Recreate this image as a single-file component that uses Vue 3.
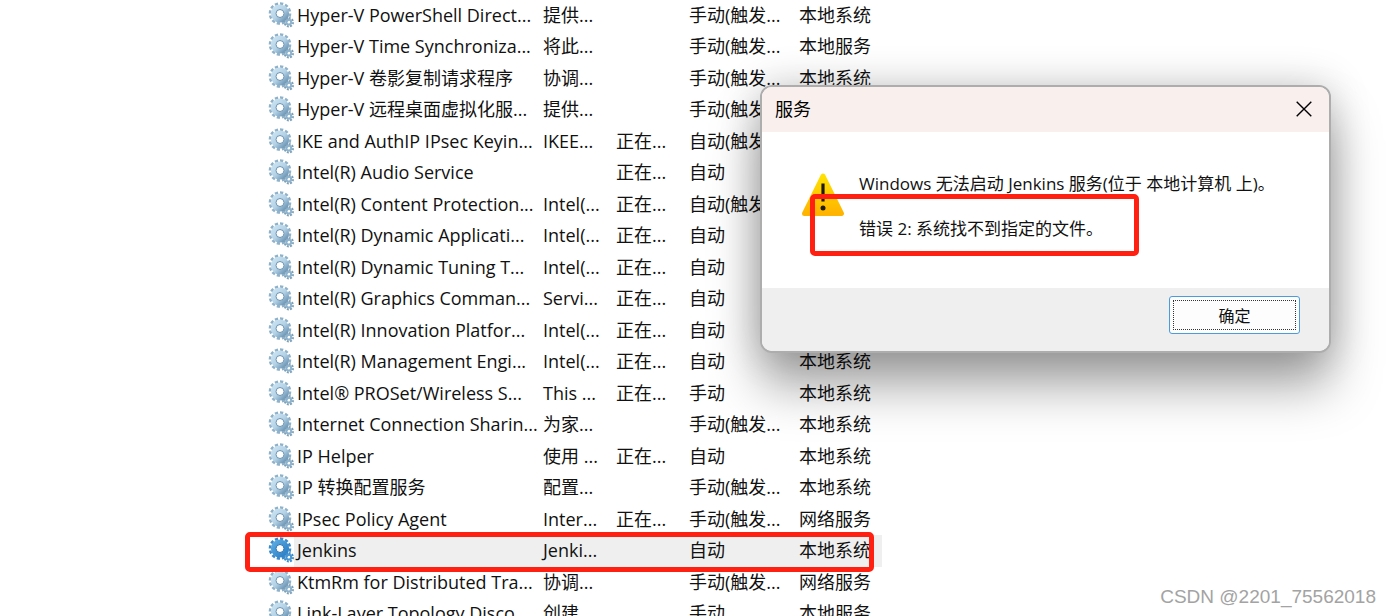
<script setup>
const rows = [
  ['Hyper-V PowerShell Direct...', '提供...', '', '手动(触发...', '本地系统'],
  ['Hyper-V Time Synchroniza...', '将此...', '', '手动(触发...', '本地服务'],
  ['Hyper-V 卷影复制请求程序', '协调...', '', '手动(触发...', '本地系统'],
  ['Hyper-V 远程桌面虚拟化服...', '提供...', '', '手动(触发...', '本地系统'],
  ['IKE and AuthIP IPsec Keyin...', 'IKEE...', '正在...', '自动(触发...', ''],
  ['Intel(R) Audio Service', '', '正在...', '自动', ''],
  ['Intel(R) Content Protection...', 'Intel(...', '正在...', '自动(触发...', ''],
  ['Intel(R) Dynamic Applicati...', 'Intel(...', '正在...', '自动', ''],
  ['Intel(R) Dynamic Tuning T...', 'Intel(...', '正在...', '自动', ''],
  ['Intel(R) Graphics Comman...', 'Servi...', '正在...', '自动', ''],
  ['Intel(R) Innovation Platfor...', 'Intel(...', '正在...', '自动', ''],
  ['Intel(R) Management Engi...', 'Intel(...', '正在...', '自动', '本地系统'],
  ['Intel® PROSet/Wireless S...', 'This ...', '正在...', '手动', '本地系统'],
  ['Internet Connection Sharin...', '为家...', '', '手动(触发...', '本地系统'],
  ['IP Helper', '使用 ...', '正在...', '自动', '本地系统'],
  ['IP 转换配置服务', '配置...', '', '手动(触发...', '本地系统'],
  ['IPsec Policy Agent', 'Inter...', '正在...', '手动(触发...', '网络服务'],
  ['Jenkins', 'Jenki...', '', '自动', '本地系统'],
  ['KtmRm for Distributed Tra...', '协调...', '', '手动(触发...', '网络服务'],
  ['Link-Layer Topology Disco...', '创建...', '', '手动', '本地服务'],
]
const selected = 17
</script>

<template>
  <main class="page">
    <svg class="defs" aria-hidden="true">
      <defs>
        <linearGradient id="gear" x1="0" y1="0" x2="1" y2="1">
          <stop offset="0" stop-color="#c9e2f1" />
          <stop offset="0.5" stop-color="#b4d2e6" />
          <stop offset="1" stop-color="#6691b2" />
        </linearGradient>
        <linearGradient id="gear-on" x1="0" y1="0" x2="1" y2="1">
          <stop offset="0" stop-color="#5aa9e0" />
          <stop offset="1" stop-color="#2a7fc6" />
        </linearGradient>
        <linearGradient id="warn" x1="0" y1="0" x2="0" y2="1">
          <stop offset="0" stop-color="#ffe000" />
          <stop offset="1" stop-color="#ffb400" />
        </linearGradient>
      </defs>
    </svg>

    <table class="services">
      <tbody>
        <tr v-for="(row, i) in rows" :key="row[0]" :class="{ selected: i === selected }">
          <td class="icon">
            <svg class="gear" viewBox="0 0 26 26" aria-hidden="true">
              <circle class="teeth" cx="12" cy="11.5" r="10" pathLength="48" />
              <circle class="ring" cx="12" cy="11.5" r="6.6" />
              <circle class="rim" cx="12" cy="11.5" r="4" />
              <circle class="small-teeth" cx="20.8" cy="20.2" r="4.2" pathLength="32" />
              <circle class="small-ring" cx="20.8" cy="20.2" r="2.4" />
            </svg>
          </td>
          <td class="name">{{ row[0] }}</td>
          <td class="desc">{{ row[1] }}</td>
          <td class="status">{{ row[2] }}</td>
          <td class="startup">{{ row[3] }}</td>
          <td class="logon">{{ row[4] }}</td>
        </tr>
      </tbody>
    </table>

    <div class="mark mark-row"></div>

    <section class="dialog" role="alertdialog" aria-labelledby="dlg-title" aria-describedby="dlg-text">
      <header class="titlebar">
        <h1 id="dlg-title">服务</h1>
        <button class="close" type="button" aria-label="关闭">
          <svg viewBox="0 0 16 16" aria-hidden="true"><path d="M0.7 0.7 15.3 15.3M15.3 0.7 0.7 15.3" /></svg>
        </button>
      </header>
      <div class="content">
        <svg class="warning" viewBox="0 0 44 44" aria-hidden="true">
          <path d="M22 3 40.5 40.5H3.5Z" fill="url(#warn)" stroke="url(#warn)" stroke-width="5" stroke-linejoin="round" />
          <path d="M20.4 10.5h3.2v18h-3.2Z" fill="#1d1a10" />
          <circle cx="22" cy="35" r="2.5" fill="#1d1a10" />
        </svg>
        <div id="dlg-text" class="message">
          <p>Windows 无法启动 Jenkins 服务(位于 本地计算机 上)。</p>
          <p>错误 2: 系统找不到指定的文件。</p>
        </div>
        <div class="mark mark-error"></div>
      </div>
      <footer class="actions">
        <button class="ok" type="button"><span>确定</span></button>
      </footer>
    </section>

    <p class="watermark">CSDN @2201_75562018</p>
  </main>
</template>

<style>
body {
  background: #fff;
}
</style>

<style scoped>
.page {
  position: relative;
  height: 100vh;
  overflow: hidden;
  background: #fff;
  color: #111;
  font-family: "Open Sans", "Noto Sans CJK SC", sans-serif;
  font-size: 18px;
}
.defs {
  position: absolute;
  width: 0;
  height: 0;
}
.services {
  margin-left: 268px;
  width: 614px;
  table-layout: fixed;
  border-collapse: collapse;
  line-height: 28px;
}
.services tr {
  height: 31px;
}
.services tr:nth-child(even) {
  height: 32px;
}
.services td {
  padding: 0 0 2px;
  white-space: nowrap;
  overflow: visible;
}
.services .icon {
  width: 26px;
  line-height: 0;
}
.services .name {
  width: 249px;
  padding-left: 3px;
  box-sizing: border-box;
}
.desc,
.status {
  width: 73px;
}
.startup {
  width: 110px;
}
.selected td:not(.icon) {
  background: #efefef;
}
.gear {
  display: block;
  width: 26px;
  height: 26px;
  fill: none;
  stroke: url(#gear);
}
.teeth {
  stroke-width: 2.6;
  stroke-dasharray: 2.5 1.5;
  stroke: #8fb2ca;
}
.ring {
  stroke-width: 5;
}
.rim {
  stroke-width: 1;
  stroke: #6c93b0;
}
.small-teeth {
  stroke-width: 2;
  stroke-dasharray: 2.4 1.6;
  stroke: #7f9fb6;
}
.small-ring {
  stroke-width: 2;
  stroke: #8db3cd;
}
.selected .ring {
  stroke: url(#gear-on);
}
.selected .teeth,
.selected .small-teeth {
  stroke: #3b8bca;
}
.selected .rim {
  stroke: #2a70ae;
}
.selected .small-ring {
  stroke: #4796d2;
}
.mark {
  position: absolute;
  box-sizing: border-box;
  border: 5px solid #ff2012;
  border-radius: 5px;
  pointer-events: none;
}
.mark-row {
  left: 245px;
  top: 532px;
  width: 629px;
  height: 40px;
}
.dialog {
  position: absolute;
  left: 760px;
  top: 85px;
  width: 571px;
  box-sizing: border-box;
  border: 2px solid #adadad;
  border-radius: 12px;
  background: #fff;
  box-shadow: 0 34px 50px rgba(0, 0, 0, 0.34), 0 0 40px rgba(0, 0, 0, 0.2);
}
.titlebar {
  display: flex;
  align-items: center;
  justify-content: space-between;
  height: 45px;
  padding: 0 17px 2px 13px;
  box-sizing: border-box;
  background: #f9f0ee;
  border-radius: 10px 10px 0 0;
}
.titlebar h1 {
  margin: 0;
  font-size: 18px;
  font-weight: 400;
  line-height: 24px;
  color: #000;
}
.close {
  display: flex;
  padding: 0;
  border: 0;
  background: none;
}
.close svg {
  width: 16px;
  height: 16px;
  fill: none;
  stroke: #000;
  stroke-width: 1.4;
}
.content {
  position: relative;
  display: flex;
  align-items: flex-start;
  gap: 14px;
  height: 156px;
  padding: 40px 20px 0 39px;
  box-sizing: border-box;
}
.warning {
  width: 44px;
  height: 44px;
  margin-top: 1px;
}
.message {
  font-size: 17px;
  line-height: 24px;
}
.message p {
  margin: 0 0 21px;
  white-space: nowrap;
}
.mark-error {
  left: 48px;
  top: 62px;
  width: 329px;
  height: 62px;
}
.actions {
  display: flex;
  justify-content: flex-end;
  padding: 8px 29px 17px;
  background: #efefef;
  border-radius: 0 0 10px 10px;
}
.ok {
  width: 131px;
  height: 38px;
  padding: 3px;
  border: 1px solid #4a9cdb;
  border-radius: 3px;
  background: #fdfdfd;
  font: inherit;
  font-size: 16px;
  color: #111;
}
.ok span {
  display: flex;
  align-items: center;
  justify-content: center;
  height: 100%;
  box-sizing: border-box;
  border: 1px dotted #333;
}
.watermark {
  position: absolute;
  right: 15px;
  bottom: 7px;
  margin: 0;
  font-family: "Liberation Sans", Arial, sans-serif;
  font-size: 19px;
  line-height: 24px;
  color: #a3a3a3;
}
</style>
